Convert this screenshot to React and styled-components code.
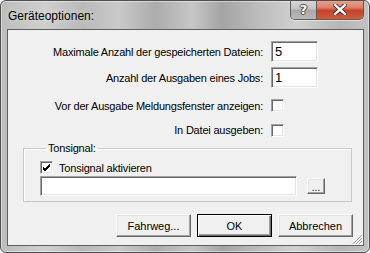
import React from "react";
import styled, { createGlobalStyle } from "styled-components";

const GlobalStyle = createGlobalStyle`
  html, body {
    margin: 0;
    padding: 0;
    background: #ffffff;
  }
  * {
    box-sizing: border-box;
  }
`;

export default function App() {
  return (
    <>
      <GlobalStyle />
      <Window>
        <TitleBar>
          <Title>Geräteoptionen:</Title>
          <Controls>
            <HelpBtn>?</HelpBtn>
            <CloseBtn>
              <svg width="14" height="11" viewBox="0 0 14 11">
                <path
                  d="M2 1 L12 10 M12 1 L2 10"
                  stroke="#3a2a2a"
                  strokeWidth="4.2"
                  strokeLinecap="square"
                />
                <path
                  d="M2 1 L12 10 M12 1 L2 10"
                  stroke="#ffffff"
                  strokeWidth="2.4"
                  strokeLinecap="square"
                />
              </svg>
            </CloseBtn>
          </Controls>
        </TitleBar>

        <Client>
          <Form>
            <Label>Maximale Anzahl der gespeicherten Dateien:</Label>
            <TextBox defaultValue="5" />
            <Label>Anzahl der Ausgaben eines Jobs:</Label>
            <TextBox defaultValue="1" />
            <Label>Vor der Ausgabe Meldungsfenster anzeigen:</Label>
            <Check />
            <Label>In Datei ausgeben:</Label>
            <Check />
          </Form>

          <Group>
            <Legend>Tonsignal:</Legend>
            <CheckRow>
              <Check $checked>
                <svg width="9" height="9" viewBox="0 0 9 9">
                  <path d="M1 4 L3 6 L8 1 M1 5 L3 7 L8 2 M1 6 L3 8 L8 3" stroke="#000" strokeWidth="1" fill="none" />
                </svg>
              </Check>
              <span>Tonsignal aktivieren</span>
            </CheckRow>
            <FieldRow>
              <PathBox />
              <SmallBtn>...</SmallBtn>
            </FieldRow>
          </Group>

          <ButtonRow>
            <Button>Fahrweg...</Button>
            <Button $default>OK</Button>
            <Button>Abbrechen</Button>
          </ButtonRow>

          <Grip width="11" height="11" viewBox="0 0 11 11">
            <path d="M10 1 L1 10 M10 4 L4 10 M10 7 L7 10" stroke="#a0a0a0" strokeWidth="1" />
            <path d="M11 2 L2 11 M11 5 L5 11 M11 8 L8 11" stroke="#ffffff" strokeWidth="1" />
          </Grip>
        </Client>
      </Window>
    </>
  );
}

const Window = styled.div`
  width: 370px;
  height: 253px;
  display: flex;
  flex-direction: column;
  border: 1px solid #4f4f4f;
  border-radius: 6px;
  overflow: hidden;
  background: linear-gradient(
    90deg,
    #bcbcbc 0%,
    #cfcfcf 12%,
    #b9b9b9 22%,
    #c9c9c9 32%,
    #acacac 42%,
    #c6c6c6 52%,
    #a4a4a4 60%,
    #bcbcbc 70%,
    #d0d0d0 80%,
    #b6b6b6 92%,
    #c2c2c2 100%
  );
  box-shadow: inset 0 0 0 1px rgba(255, 255, 255, 0.45);
  font-family: "Liberation Sans", Arial, sans-serif;
`;

const TitleBar = styled.div`
  height: 28px;
  display: flex;
  align-items: flex-start;
  padding-left: 7px;
`;

const Title = styled.div`
  font-size: 12px;
  color: #000;
  padding-top: 8px;
  text-shadow: 0 0 6px rgba(255, 255, 255, 0.7);
`;

const Controls = styled.div`
  margin-left: auto;
  margin-right: 5px;
  margin-top: -1px;
  display: flex;
  height: 20px;
  border: 1px solid #5c5c5c;
  border-top: none;
  border-radius: 0 0 5px 5px;
  overflow: hidden;
  box-shadow: 0 1px 0 rgba(255, 255, 255, 0.5);
`;

const HelpBtn = styled.div`
  width: 26px;
  display: flex;
  align-items: center;
  justify-content: center;
  border-right: 1px solid #5c5c5c;
  background: linear-gradient(180deg, #dadada 0%, #c4c4c4 45%, #a9a9a9 55%, #b8b8b8 100%);
  font-family: "DejaVu Sans", sans-serif;
  font-weight: bold;
  font-size: 13px;
  color: #ffffff;
  text-shadow: 0 0 1px #333, 1px 0 0 #555, -1px 0 0 #555, 0 1px 0 #555, 0 -1px 0 #555;
`;

const CloseBtn = styled.div`
  width: 46px;
  display: flex;
  align-items: center;
  justify-content: center;
  background: linear-gradient(180deg, #e9a592 0%, #dc7f68 40%, #c5432c 55%, #d05a3e 100%);
`;

const Client = styled.div`
  position: relative;
  flex: 1;
  margin: 0 5px 6px 6px;
  border: 1px solid #5e5e5e;
  background: #f0f0f0;
  display: flex;
  flex-direction: column;
  font-size: 11px;
  letter-spacing: -0.2px;
  color: #000;
`;

const Form = styled.div`
  display: grid;
  grid-template-columns: 1fr 47px;
  grid-template-rows: 21px 21px 25px 14px;
  column-gap: 8px;
  row-gap: 5px;
  padding: 11px 45px 0 0;
  align-items: center;
`;

const Label = styled.span`
  justify-self: end;
  white-space: nowrap;
`;

const sunken = `
  background: #fff;
  border-top: 1px solid #a0a0a0;
  border-left: 1px solid #a0a0a0;
  border-bottom: 1px solid #ffffff;
  border-right: 1px solid #ffffff;
  box-shadow: inset 1px 1px 0 #696969, inset -1px -1px 0 #e3e3e3;
`;

const TextBox = styled.input`
  ${sunken}
  width: 47px;
  height: 21px;
  padding: 0 3px;
  font-family: inherit;
  font-size: 13px;
  color: #000;
  outline: none;
`;

const Check = styled.span`
  ${sunken}
  justify-self: start;
  width: 13px;
  height: 13px;
  display: flex;
  align-items: center;
  justify-content: center;
`;

const Group = styled.fieldset`
  margin: 5px 11px 0 15px;
  padding: 5px 16px 5px 16px;
  border: 1px solid #c8c8c8;
  box-shadow: inset 1px 1px 0 #fff;
  border-radius: 0;
`;

const Legend = styled.legend`
  padding: 0 2px;
  margin-left: 6px;
  line-height: 13px;
  font-size: 11px;
`;

const CheckRow = styled.div`
  display: flex;
  align-items: center;
  gap: 6px;
  height: 15px;
`;

const FieldRow = styled.div`
  display: flex;
  align-items: center;
  gap: 10px;
  margin-top: 1px;
`;

const PathBox = styled.div`
  ${sunken}
  width: 257px;
  height: 20px;
`;

const raised = `
  background: #f0f0f0;
  border-top: 1px solid #ffffff;
  border-left: 1px solid #ffffff;
  border-bottom: 1px solid #696969;
  border-right: 1px solid #696969;
  box-shadow: inset -1px -1px 0 #a0a0a0, inset 1px 1px 0 #e3e3e3;
`;

const SmallBtn = styled.div`
  ${raised}
  width: 18px;
  height: 16px;
  display: flex;
  align-items: flex-end;
  justify-content: center;
  font-size: 10px;
  line-height: 11px;
  letter-spacing: 0;
`;

const ButtonRow = styled.div`
  display: flex;
  justify-content: flex-end;
  gap: 6px;
  padding-right: 10px;
  margin-top: 12px;
`;

const Button = styled.div`
  ${raised}
  width: 75px;
  height: 23px;
  display: flex;
  align-items: center;
  justify-content: center;
  font-size: 11px;
  letter-spacing: 0;
  ${(p) =>
    p.$default &&
    `
    border: 1px solid #000;
    box-shadow: inset 1px 1px 0 #fff, inset -1px -1px 0 #696969, inset -2px -2px 0 #a0a0a0;
  `}
`;

const Grip = styled.svg`
  position: absolute;
  right: 0;
  bottom: 0;
`;
